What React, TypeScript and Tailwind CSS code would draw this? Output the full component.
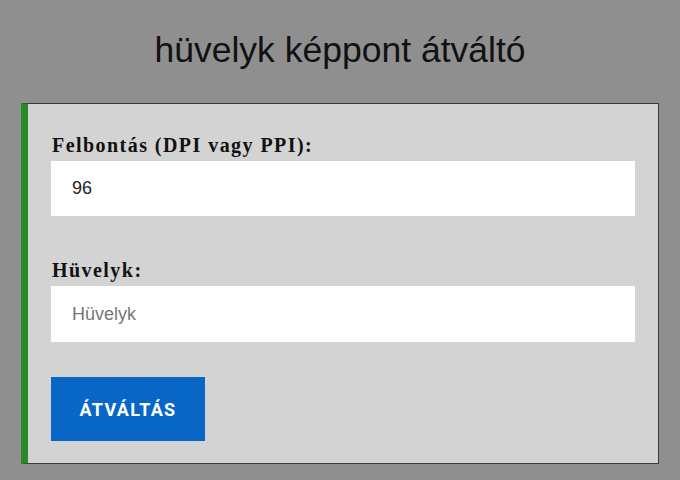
import React from "react";

export default function App() {
  return (
    <div className="min-h-[480px] w-[680px] overflow-hidden bg-[#8f8f8f]">
      <h1 className="pt-[28px] pb-[31px] text-center text-[35.5px] leading-[44px] text-[#111] font-['Liberation_Sans',Arial,sans-serif]">
        hüvelyk képpont átváltó
      </h1>
      <div className="ml-[21px] flex w-[638px] flex-col items-stretch border-y border-r border-l-[7px] border-y-[#3a3a3a] border-r-[#3a3a3a] border-l-[#2a8a2a] bg-[#d3d3d3] pt-[26px] pr-[23px] pb-[22px] pl-[23px]">
        <label className="block pl-px text-[20px] leading-[31px] font-bold tracking-[1.45px] text-[#111] font-['Liberation_Serif','Times_New_Roman',serif]">
          Felbontás (DPI vagy PPI):
        </label>
        <div className="flex h-[55px] items-center bg-white pl-[21px] text-[18px] text-[#222] font-['Liberation_Sans',Arial,sans-serif]">
          96
        </div>
        <label className="mt-[39px] block pl-px text-[20px] leading-[31px] font-bold tracking-[1.45px] text-[#111] font-['Liberation_Serif','Times_New_Roman',serif]">
          Hüvelyk:
        </label>
        <div className="flex h-[56px] items-center bg-white pl-[21px] text-[18px] text-[#777] font-['Liberation_Sans',Arial,sans-serif]">
          Hüvelyk
        </div>
        <div className="mt-[35px] flex">
          <button className="h-[64px] w-[154px] bg-[#0866c6] text-[18px] font-bold tracking-[1.3px] text-white font-['Roboto','Liberation_Sans',Arial,sans-serif]">
            ÁTVÁLTÁS
          </button>
        </div>
      </div>
    </div>
  );
}
